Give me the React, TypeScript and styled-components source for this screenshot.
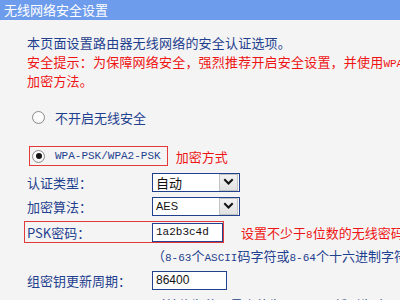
import React from "react";
import styled, { createGlobalStyle } from "styled-components";

const BLUE = "#1f3f8f";
const RED = "#ee1414";
const FRAME = "#e23a3a";

const GlobalStyle = createGlobalStyle`
  html, body { margin: 0; padding: 0; background: #f4f4f4; }
  body {
    width: 400px;
    height: 300px;
    overflow: hidden;
    font-family: "Noto Sans CJK SC", "Noto Sans", sans-serif;
  }
`;

const Page = styled.div`
  width: 400px;
  height: 300px;
  overflow: hidden;
  background: #f4f4f4;
`;

const Header = styled.div`
  height: 20px;
  background: #6d9cec;
  color: #fff;
  font-size: 13px;
  line-height: 20px;
  padding-left: 4px;
  white-space: nowrap;
`;

const Content = styled.div`
  padding: 13px 0 0 24px;
`;

const TextLine = styled.div<{ $red?: boolean }>`
  height: 19px;
  line-height: 19px;
  font-size: 13px;
  letter-spacing: 0.2px;
  padding-left: 3px;
  color: ${(p) => (p.$red ? RED : BLUE)};
  white-space: nowrap;
`;

const Mono = styled.span`
  font-family: "Liberation Mono", "DejaVu Sans Mono", monospace;
  font-size: 11px;
  letter-spacing: 0;
`;

const OptionRow = styled.div<{ $mt: number }>`
  display: flex;
  align-items: center;
  margin-top: ${(p) => p.$mt}px;
  white-space: nowrap;
`;

const OptionBox = styled.label<{ $framed?: boolean }>`
  margin-left: 5px;
  height: 18px;
  display: flex;
  align-items: center;
  gap: 10px;
  padding: 0 6px 0 2px;
  border: 1px solid ${(p) => (p.$framed ? FRAME : "transparent")};
  font-size: 13px;
  color: ${BLUE};
`;

const Radio = styled.span<{ $checked?: boolean }>`
  flex: none;
  width: 13px;
  height: 13px;
  box-sizing: border-box;
  border-radius: 50%;
  border: 1px solid #8c8c8c;
  background: radial-gradient(circle at 50% 40%, #ffffff 40%, #e2e2e2 100%);
  display: flex;
  align-items: center;
  justify-content: center;
  &::after {
    content: "";
    display: ${(p) => (p.$checked ? "block" : "none")};
    width: 6px;
    height: 6px;
    border-radius: 50%;
    background: #151515;
  }
`;

const RedNote = styled.span<{ $ml: number }>`
  margin-left: ${(p) => p.$ml}px;
  color: ${RED};
  font-size: 13px;
  white-space: nowrap;
`;

const FormRow = styled.div<{ $mt?: number }>`
  display: grid;
  grid-template-columns: 125px auto;
  align-items: center;
  height: 24px;
  margin-top: ${(p) => p.$mt ?? 0}px;
  padding-left: 3px;
`;

const Label = styled.span`
  font-size: 13px;
  color: ${BLUE};
  white-space: nowrap;
`;

const Select = styled.div`
  width: 88px;
  height: 19px;
  box-sizing: border-box;
  border: 1px solid #23408e;
  background: #fff;
  display: flex;
  align-items: stretch;
`;

const SelectValue = styled.span<{ $latin?: boolean }>`
  flex: 1;
  padding-left: 3px;
  font-size: ${(p) => (p.$latin ? "11px" : "13px")};
  font-family: ${(p) =>
    p.$latin ? `"Liberation Sans", sans-serif` : `"Noto Sans CJK SC", sans-serif`};
  line-height: 17px;
  color: #111;
`;

const SelectButton = styled.span`
  width: 19px;
  margin: 0 1px 0 0;
  box-sizing: border-box;
  border: 1px solid #c4c4c4;
  background: linear-gradient(#f2f2f2, #e2e2e2);
  display: flex;
  align-items: center;
  justify-content: center;
`;

const TextInput = styled.input<{ $w: number; $mono?: boolean }>`
  width: ${(p) => p.$w}px;
  height: 19px;
  box-sizing: border-box;
  margin: 0;
  border: 1px solid #24418f;
  border-radius: 0;
  background: #fff;
  padding: 0 0 0 3px;
  font-family: ${(p) =>
    p.$mono ? `"Liberation Mono", monospace` : `"Liberation Sans", sans-serif`};
  font-size: ${(p) => (p.$mono ? "11px" : "12px")};
  line-height: 17px;
  color: #111;
  outline: none;
`;

const PskRow = styled.div`
  display: flex;
  align-items: center;
  margin-top: 3px;
`;

const PskBox = styled.div`
  width: 201px;
  height: 22px;
  box-sizing: border-box;
  border: 1px solid ${FRAME};
  padding-left: 2px;
  display: grid;
  grid-template-columns: 125px auto;
  align-items: center;
`;

const Hint = styled.div<{ $mt: number }>`
  margin: ${(p) => p.$mt}px 0 0 128px;
  height: 20px;
  line-height: 20px;
  font-size: 13px;
  color: ${BLUE};
  white-space: nowrap;
`;

const Chevron = () => (
  <svg width="11" height="8" viewBox="0 0 11 8" aria-hidden="true">
    <polyline
      points="2,2 5.5,5.5 9,2"
      fill="none"
      stroke="#111"
      strokeWidth="2"
      strokeLinecap="square"
    />
  </svg>
);

export default function App() {
  return (
    <>
      <GlobalStyle />
      <Page>
        <Header>无线网络安全设置</Header>
        <Content>
          <TextLine>本页面设置路由器无线网络的安全认证选项。</TextLine>
          <TextLine $red>
            安全提示：为保障网络安全，强烈推荐开启安全设置，并使用<Mono>WPA-PSK/WPA2-PSK AES</Mono>
          </TextLine>
          <TextLine $red>加密方法。</TextLine>

          <OptionRow $mt={17}>
            <OptionBox>
              <Radio />
              不开启无线安全
            </OptionBox>
          </OptionRow>

          <OptionRow $mt={19}>
            <OptionBox $framed>
              <Radio $checked />
              <Mono>WPA-PSK/WPA2-PSK</Mono>
            </OptionBox>
            <RedNote $ml={8}>加密方式</RedNote>
          </OptionRow>

          <FormRow $mt={4}>
            <Label>认证类型：</Label>
            <Select>
              <SelectValue>自动</SelectValue>
              <SelectButton>
                <Chevron />
              </SelectButton>
            </Select>
          </FormRow>

          <FormRow>
            <Label>加密算法：</Label>
            <Select>
              <SelectValue $latin>AES</SelectValue>
              <SelectButton>
                <Chevron />
              </SelectButton>
            </Select>
          </FormRow>

          <PskRow>
            <PskBox>
              <Label>PSK密码：</Label>
              <TextInput $w={71} $mono readOnly value="1a2b3c4d" />
            </PskBox>
            <RedNote $ml={17}>
              设置不少于<Mono>8</Mono>位数的无线密码
            </RedNote>
          </PskRow>

          <Hint $mt={3}>
            （<Mono>8-63</Mono>个<Mono>ASCII</Mono>码字符或<Mono>8-64</Mono>个十六进制字符）
          </Hint>

          <FormRow $mt={2}>
            <Label>组密钥更新周期：</Label>
            <TextInput $w={75} readOnly value="86400" />
          </FormRow>

          <Hint $mt={3}>
            （单位为秒，最小值为<Mono>30</Mono>，不更新则为<Mono>0</Mono>）
          </Hint>
        </Content>
      </Page>
    </>
  );
}
